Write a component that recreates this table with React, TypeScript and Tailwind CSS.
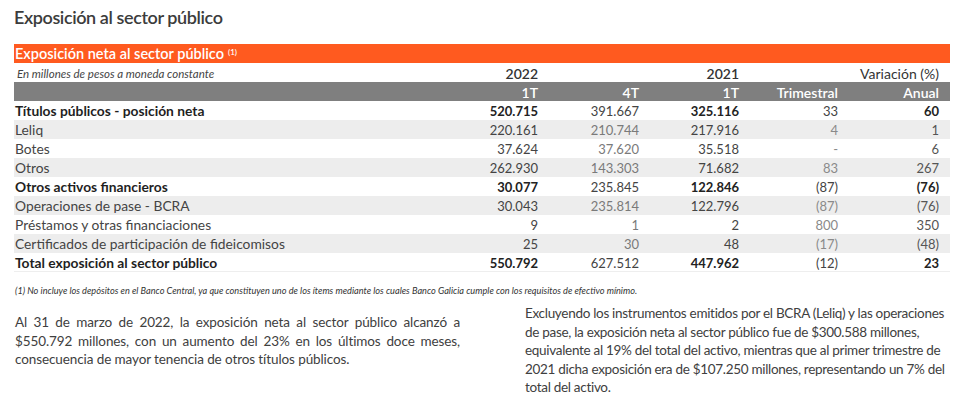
const rows = [
  { label: 'Títulos públicos - posición neta', v: ['520.715', '391.667', '325.116', '33', '60'], bold: true, band: false },
  { label: 'Leliq', v: ['220.161', '210.744', '217.916', '4', '1'], bold: false, band: true },
  { label: 'Botes', v: ['37.624', '37.620', '35.518', '-', '6'], bold: false, band: false },
  { label: 'Otros', v: ['262.930', '143.303', '71.682', '83', '267'], bold: false, band: true },
  { label: 'Otros activos financieros', v: ['30.077', '235.845', '122.846', '(87)', '(76)'], bold: true, band: false },
  { label: 'Operaciones de pase - BCRA', v: ['30.043', '235.814', '122.796', '(87)', '(76)'], bold: false, band: true },
  { label: 'Préstamos y otras financiaciones', v: ['9', '1', '2', '800', '350'], bold: false, band: false },
  { label: 'Certificados de participación de fideicomisos', v: ['25', '30', '48', '(17)', '(48)'], bold: false, band: true },
  { label: 'Total exposición al sector público', v: ['550.792', '627.512', '447.962', '(12)', '23'], bold: true, band: false },
];

const grid = 'grid grid-cols-[436px_88px_101px_100px_99px_101px] pr-[11px]';

// column text colours: bold rows / normal rows
const boldCols = ['font-bold text-[#222]', 'text-[#444]', 'font-bold text-[#222]', 'text-[#444]', 'font-bold text-[#222]'];
const normCols = ['text-[#444]', 'text-[#7a7a7a]', 'text-[#444]', 'text-[#8a8a8a]', 'text-[#555]'];

export default function App() {
  return (
    <div className="w-[962px] h-[416px] bg-white font-['Lato',sans-serif] overflow-hidden">
      <h1 className="pl-[14px] pt-[5px] h-[44px] text-[18px] leading-[24px] font-semibold text-[#3c3c3c] tracking-[-0.4px]">
        Exposición al sector público
      </h1>

      <div className="ml-[14px] w-[936px] text-[13px]">
        <div className="h-[19px] bg-[#ff5a1f] flex items-center pl-[1px] text-white font-semibold text-[14.5px]">
          Exposición neta al sector público
          <sup className="ml-[4px] text-[8px] relative -top-[2px]">(1)</sup>
        </div>

        <div className={`${grid} h-[19px] items-center text-[#333] text-[14px]`}>
          <div className="pl-[3px] italic text-[11.5px] text-[#444]">En millones de pesos a moneda constante</div>
          <div className="text-right font-semibold">2022</div>
          <div />
          <div className="text-right font-semibold">2021</div>
          <div className="col-span-2 text-right">Variación (%)</div>
        </div>

        <div className={`${grid} h-[19px] items-center bg-[#7f7f7f] text-white text-[14px] font-semibold`}>
          <div />
          <div className="text-right">1T</div>
          <div className="text-right">4T</div>
          <div className="text-right">1T</div>
          <div className="text-right">Trimestral</div>
          <div className="text-right">Anual</div>
        </div>

        {rows.map((r) => (
          <div
            key={r.label}
            className={`${grid} h-[19px] items-center ${r.band ? 'bg-[#ededed]' : ''} ${r.label.startsWith('Total') ? 'border-b border-[#eeeeee]' : ''}`}
          >
            <div className={`pl-[1px] text-[13.8px] ${r.bold ? 'font-bold text-[#1f1f1f]' : 'text-[#444]'}`}>{r.label}</div>
            {r.v.map((x, i) => (
              <div key={i} className={`text-right ${r.bold ? boldCols[i] : normCols[i]}`}>
                {x}
              </div>
            ))}
          </div>
        ))}
      </div>

      <p className="pl-[15px] mt-[14px] italic text-[9.2px] leading-[10px] text-[#333] whitespace-nowrap">
        (1) No incluye los depósitos en el Banco Central, ya que constituyen uno de los ítems mediante los cuales Banco Galicia cumple con los requisitos de efectivo mínimo.
      </p>

      <div className="flex mt-[17px] text-[13.5px] leading-[18.5px] text-[#404040] tracking-[-0.1px]">
        <p className="ml-[15px] w-[445px] text-justify">
          Al 31 de marzo de 2022, la exposición neta al sector público alcanzó a $550.792 millones, con un aumento del 23% en los últimos doce meses, consecuencia de mayor tenencia de otros títulos públicos.
        </p>
        <p className="ml-[65px] w-[436px] -mt-[9px] whitespace-nowrap tracking-[-0.3px]">
          Excluyendo los instrumentos emitidos por el BCRA (Leliq) y las operaciones
          <br />
          de pase, la exposición neta al sector público fue de $300.588 millones,
          <br />
          equivalente al 19% del total del activo, mientras que al primer trimestre de
          <br />
          2021 dicha exposición era de $107.250 millones, representando un 7% del
          <br />
          total del activo.
        </p>
      </div>
    </div>
  );
}
